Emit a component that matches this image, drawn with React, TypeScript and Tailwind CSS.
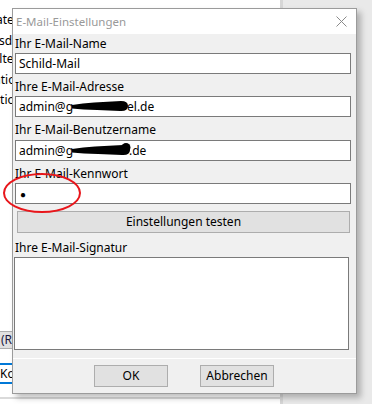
import React from "react";

const FONT = { fontFamily: '"Noto Sans", "Open Sans", sans-serif' };

// black marker scribble used to hide part of the address
function Blob({ width, bump }: { width: number; bump?: boolean }) {
  const w = width;
  return (
    <svg width={w} height={14} viewBox={`0 0 ${w} 14`} className="mx-[-2px] mt-[-2px] shrink-0">
      <path
        d={`M1 6 Q${w * 0.2} 4 ${w * 0.4} 3.5 L${w - 8} 2 Q${w - 1} 2 ${w - 1} 7 Q${w - 1} 12.5 ${w - 9} 12 L${w * 0.45} 11 Q${w * 0.2} 10.5 1 9.5 Z`}
        fill="#000"
      />
      {bump && <circle cx={w - 5} cy={4.5} r={4.5} fill="#000" />}
    </svg>
  );
}

function Label({ text, pt }: { text: string; pt: string }) {
  return <div className={`${pt} text-[12px] leading-[16px] text-black`}>{text}</div>;
}

function Field({ children }: { children?: React.ReactNode }) {
  return (
    <div className="flex h-[21px] items-center border border-[#7a7a7a] bg-white px-[3px] text-[12px] leading-[16px] text-black">
      {children}
    </div>
  );
}

function WinButton({ label }: { label: string }) {
  return (
    <div className="flex h-[22px] w-[74px] items-center justify-center border border-[#adadad] bg-[#e1e1e1] text-[12px] text-black">
      {label}
    </div>
  );
}

export default function App() {
  return (
    <div className="relative h-[404px] w-[372px] overflow-hidden bg-[#e9e9e9]" style={FONT}>
      {/* window behind */}
      <div className="absolute left-0 top-0 h-[404px] w-[283px] border-r-[3px] border-[#d6d6d6] bg-white">
        <div className="flex w-[12px] flex-col overflow-hidden whitespace-nowrap pt-[12px] text-[12px] leading-[16px] text-black">
          <div className="ml-[-4px] h-[21px]">ate</div>
          <div className="ml-[-1px] h-[18px]">sd</div>
          <div className="ml-[-10px] h-[21px]">Filte</div>
          <div className="ml-[-6px] h-[20px]">atio</div>
          <div className="ml-[-3px] h-[20px]">itio</div>
        </div>
        <div className="absolute left-0 top-[331px] flex h-[18px] w-[12px] items-center overflow-hidden whitespace-nowrap border-y border-[#adadad] bg-[#e1e1e1] pl-[1px] text-[12px] text-[#1a1a40]">
          (R
        </div>
        <div className="absolute left-0 top-[363px] flex h-[21px] w-[12px] items-center overflow-hidden whitespace-nowrap border-y-2 border-[#0078d7] bg-white text-[12px] text-black">
          Ko
        </div>
        <div className="absolute left-0 top-[397px] h-[2px] w-[283px] bg-[#dadada]" />
      </div>

      {/* dialog */}
      <div className="absolute left-[12px] top-[8px] flex h-[386px] w-[345px] flex-col border border-[#9b9b9b] bg-[#f0f0f0] shadow-[4px_4px_6px_rgba(0,0,0,0.25)]">
        <div className="flex h-[25px] shrink-0 items-center justify-between bg-white pl-[3px] pr-[9px]">
          <span className="text-[11.5px] text-[#999999]">E-Mail-Einstellungen</span>
          <svg width="11" height="11" viewBox="0 0 11 11">
            <path d="M0.5 0.5 L10.5 10.5 M10.5 0.5 L0.5 10.5" stroke="#8a8a8a" strokeWidth="1" />
          </svg>
        </div>

        <div className="flex flex-1 flex-col pl-[2px] pr-[5px]">
          <div className="h-[19px]">
            <Label text="Ihr E-Mail-Name" pt="pt-[2px]" />
          </div>
          <Field>Schild-Mail</Field>
          <div className="h-[22px]">
            <Label text="Ihre E-Mail-Adresse" pt="pt-[5px]" />
          </div>
          <Field>
            <span>admin@g</span>
            <Blob width={58} />
            <span>el.de</span>
          </Field>
          <div className="h-[23px]">
            <Label text="Ihr E-Mail-Benutzername" pt="pt-[5px]" />
          </div>
          <Field>
            <span>admin@g</span>
            <Blob width={60} bump />
            <span>.de</span>
          </Field>
          <div className="h-[22px]">
            <Label text="Ihr E-Mail-Kennwort" pt="pt-[5px]" />
          </div>
          <Field>
            <span className="pl-[1px] text-[10px] leading-[10px]">●</span>
          </Field>
          <div className="mt-[7px] ml-[2px] mr-[1px] flex h-[22px] items-center justify-center border border-[#adadad] bg-[#e1e1e1] text-[12px] text-black">
            Einstellungen testen
          </div>
          <div className="h-[24px]">
            <Label text="Ihre E-Mail-Signatur" pt="pt-[7px]" />
          </div>
          <div className="ml-[-1px] mr-[2px] h-[93px] border border-[#7a7a7a] bg-white" />
        </div>

        <div className="flex h-[35px] shrink-0 items-start gap-[32px] border-t border-white bg-[#f0f0f0] pl-[81px] pt-[6px]">
          <WinButton label="OK" />
          <WinButton label="Abbrechen" />
        </div>
      </div>

      {/* red annotation */}
      <div className="pointer-events-none absolute left-[3px] top-[173px] h-[40px] w-[78px] rounded-[50%] border-2 border-[#e8161b]" />
    </div>
  );
}
